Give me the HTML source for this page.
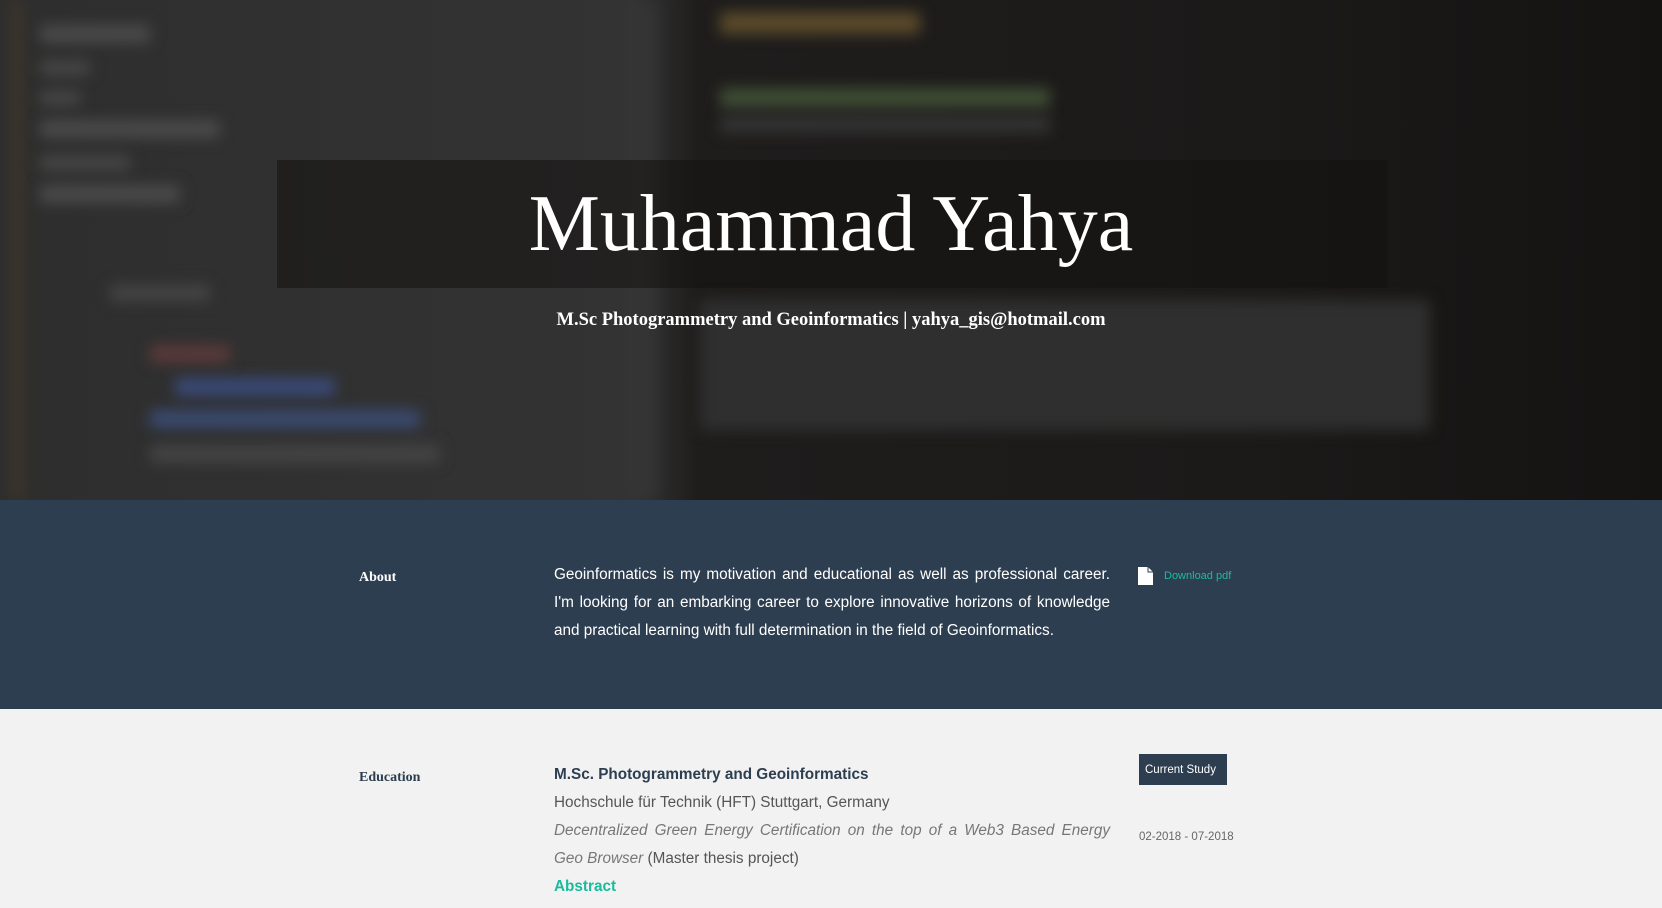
<!DOCTYPE html>
<html><head><meta charset="utf-8"><style>
*{margin:0;padding:0;box-sizing:border-box}
body{width:1662px;height:908px;overflow:hidden;background:#f2f2f2;font-family:"Liberation Sans",sans-serif;position:relative}
.hero{position:absolute;left:0;top:0;width:1662px;height:500px;overflow:hidden;background:linear-gradient(90deg,#2e2e2e 0%,#333 38%,#1f1d1c 42%,#1c1a19 75%,#151312 100%)}
.blob{position:absolute;filter:blur(7px);border-radius:3px}
.tbox{position:absolute;left:277px;top:160px;width:1110px;height:128px;background:rgba(20,18,17,.55)}
.title{position:absolute;left:0;width:1662px;top:179px;text-align:center;color:#fff;font-family:"Liberation Serif",serif;font-size:80px;line-height:90px}
.sub{position:absolute;left:0;width:1662px;top:310px;text-align:center;color:#fff;font-family:"Liberation Serif",serif;font-weight:bold;font-size:18.5px}
.about{position:absolute;left:0;top:500px;width:1662px;height:209px;background:#2d3e50}
.lbl{position:absolute;left:359px;font-family:"Liberation Serif",serif;font-weight:bold;font-size:14px}
.txt{position:absolute;left:554px;width:556px;font-size:15.3px;line-height:28px;text-align:justify}
</style></head><body>
<div class="hero">
<div class="blob" style="left:10px;top:0;width:14px;height:500px;background:#4a3a26;opacity:.5"></div>
<div class="blob" style="left:40px;top:25px;width:110px;height:18px;background:#4a4a4a"></div>
<div class="blob" style="left:40px;top:60px;width:50px;height:16px;background:#454545"></div>
<div class="blob" style="left:40px;top:90px;width:40px;height:16px;background:#454545"></div>
<div class="blob" style="left:40px;top:120px;width:180px;height:18px;background:#4a4a4a"></div>
<div class="blob" style="left:40px;top:155px;width:90px;height:16px;background:#454545"></div>
<div class="blob" style="left:40px;top:185px;width:140px;height:18px;background:#4a4a4a"></div>
<div class="blob" style="left:110px;top:285px;width:100px;height:16px;background:#454545"></div>
<div class="blob" style="left:150px;top:345px;width:80px;height:18px;background:#5a3a3a"></div>
<div class="blob" style="left:175px;top:378px;width:160px;height:18px;background:#3a4a78"></div>
<div class="blob" style="left:150px;top:410px;width:270px;height:18px;background:#3a4a70"></div>
<div class="blob" style="left:150px;top:445px;width:290px;height:18px;background:#444"></div>
<div class="blob" style="left:630px;top:0;width:30px;height:500px;background:#3a3a3a;opacity:.5"></div>
<div class="blob" style="left:720px;top:12px;width:200px;height:22px;background:#5a4a2a"></div>
<div class="blob" style="left:720px;top:88px;width:330px;height:20px;background:#3f4d35"></div>
<div class="blob" style="left:720px;top:115px;width:330px;height:18px;background:#333"></div>
<div class="blob" style="left:700px;top:300px;width:730px;height:130px;background:#2f2f2f"></div>
</div>
<div class="tbox"></div>
<div class="title">Muhammad Yahya</div>
<div class="sub">M.Sc Photogrammetry and Geoinformatics | yahya_gis@hotmail.com</div>
<div class="about">
<div class="lbl" style="top:70px;color:#fff">About</div>
<div class="txt" style="top:61px;color:#fff">Geoinformatics is my motivation and educational as well as professional career. I'm looking for an embarking career to explore innovative horizons of knowledge and practical learning with full determination in the field of Geoinformatics.</div>
<svg style="position:absolute;left:1138px;top:67px" width="15" height="18" viewBox="0 0 15 18"><path d="M0 0H10L15 5V18H0Z" fill="#fff"/><path d="M10 0V5H15" fill="none" stroke="#2d3e50" stroke-width="1"/></svg>
<div style="position:absolute;left:1164px;top:70px;color:#1abc9c;font-size:11px">Download pdf</div>
</div>
<div class="lbl" style="top:770px;color:#2d3e50">Education</div>
<div class="txt" style="top:761px;color:#555">
<div style="color:#2d3e50;font-weight:bold">M.Sc. Photogrammetry and Geoinformatics</div>
<div>Hochschule für Technik (HFT) Stuttgart, Germany</div>
<div><i style="color:#777">Decentralized Green Energy Certification on the top of a Web3 Based Energy Geo Browser</i> (Master thesis project)</div>
<div style="color:#1abc9c;font-weight:bold">Abstract</div>
</div>
<div style="position:absolute;left:1139px;top:754px;width:88px;height:31px;background:#2d3e50;color:#fff;font-size:11.5px;line-height:33px;padding-left:6px">Current Study</div>
<div style="position:absolute;left:1139px;top:831px;color:#666;font-size:11.5px">02-2018 - 07-2018</div>
</body></html>
